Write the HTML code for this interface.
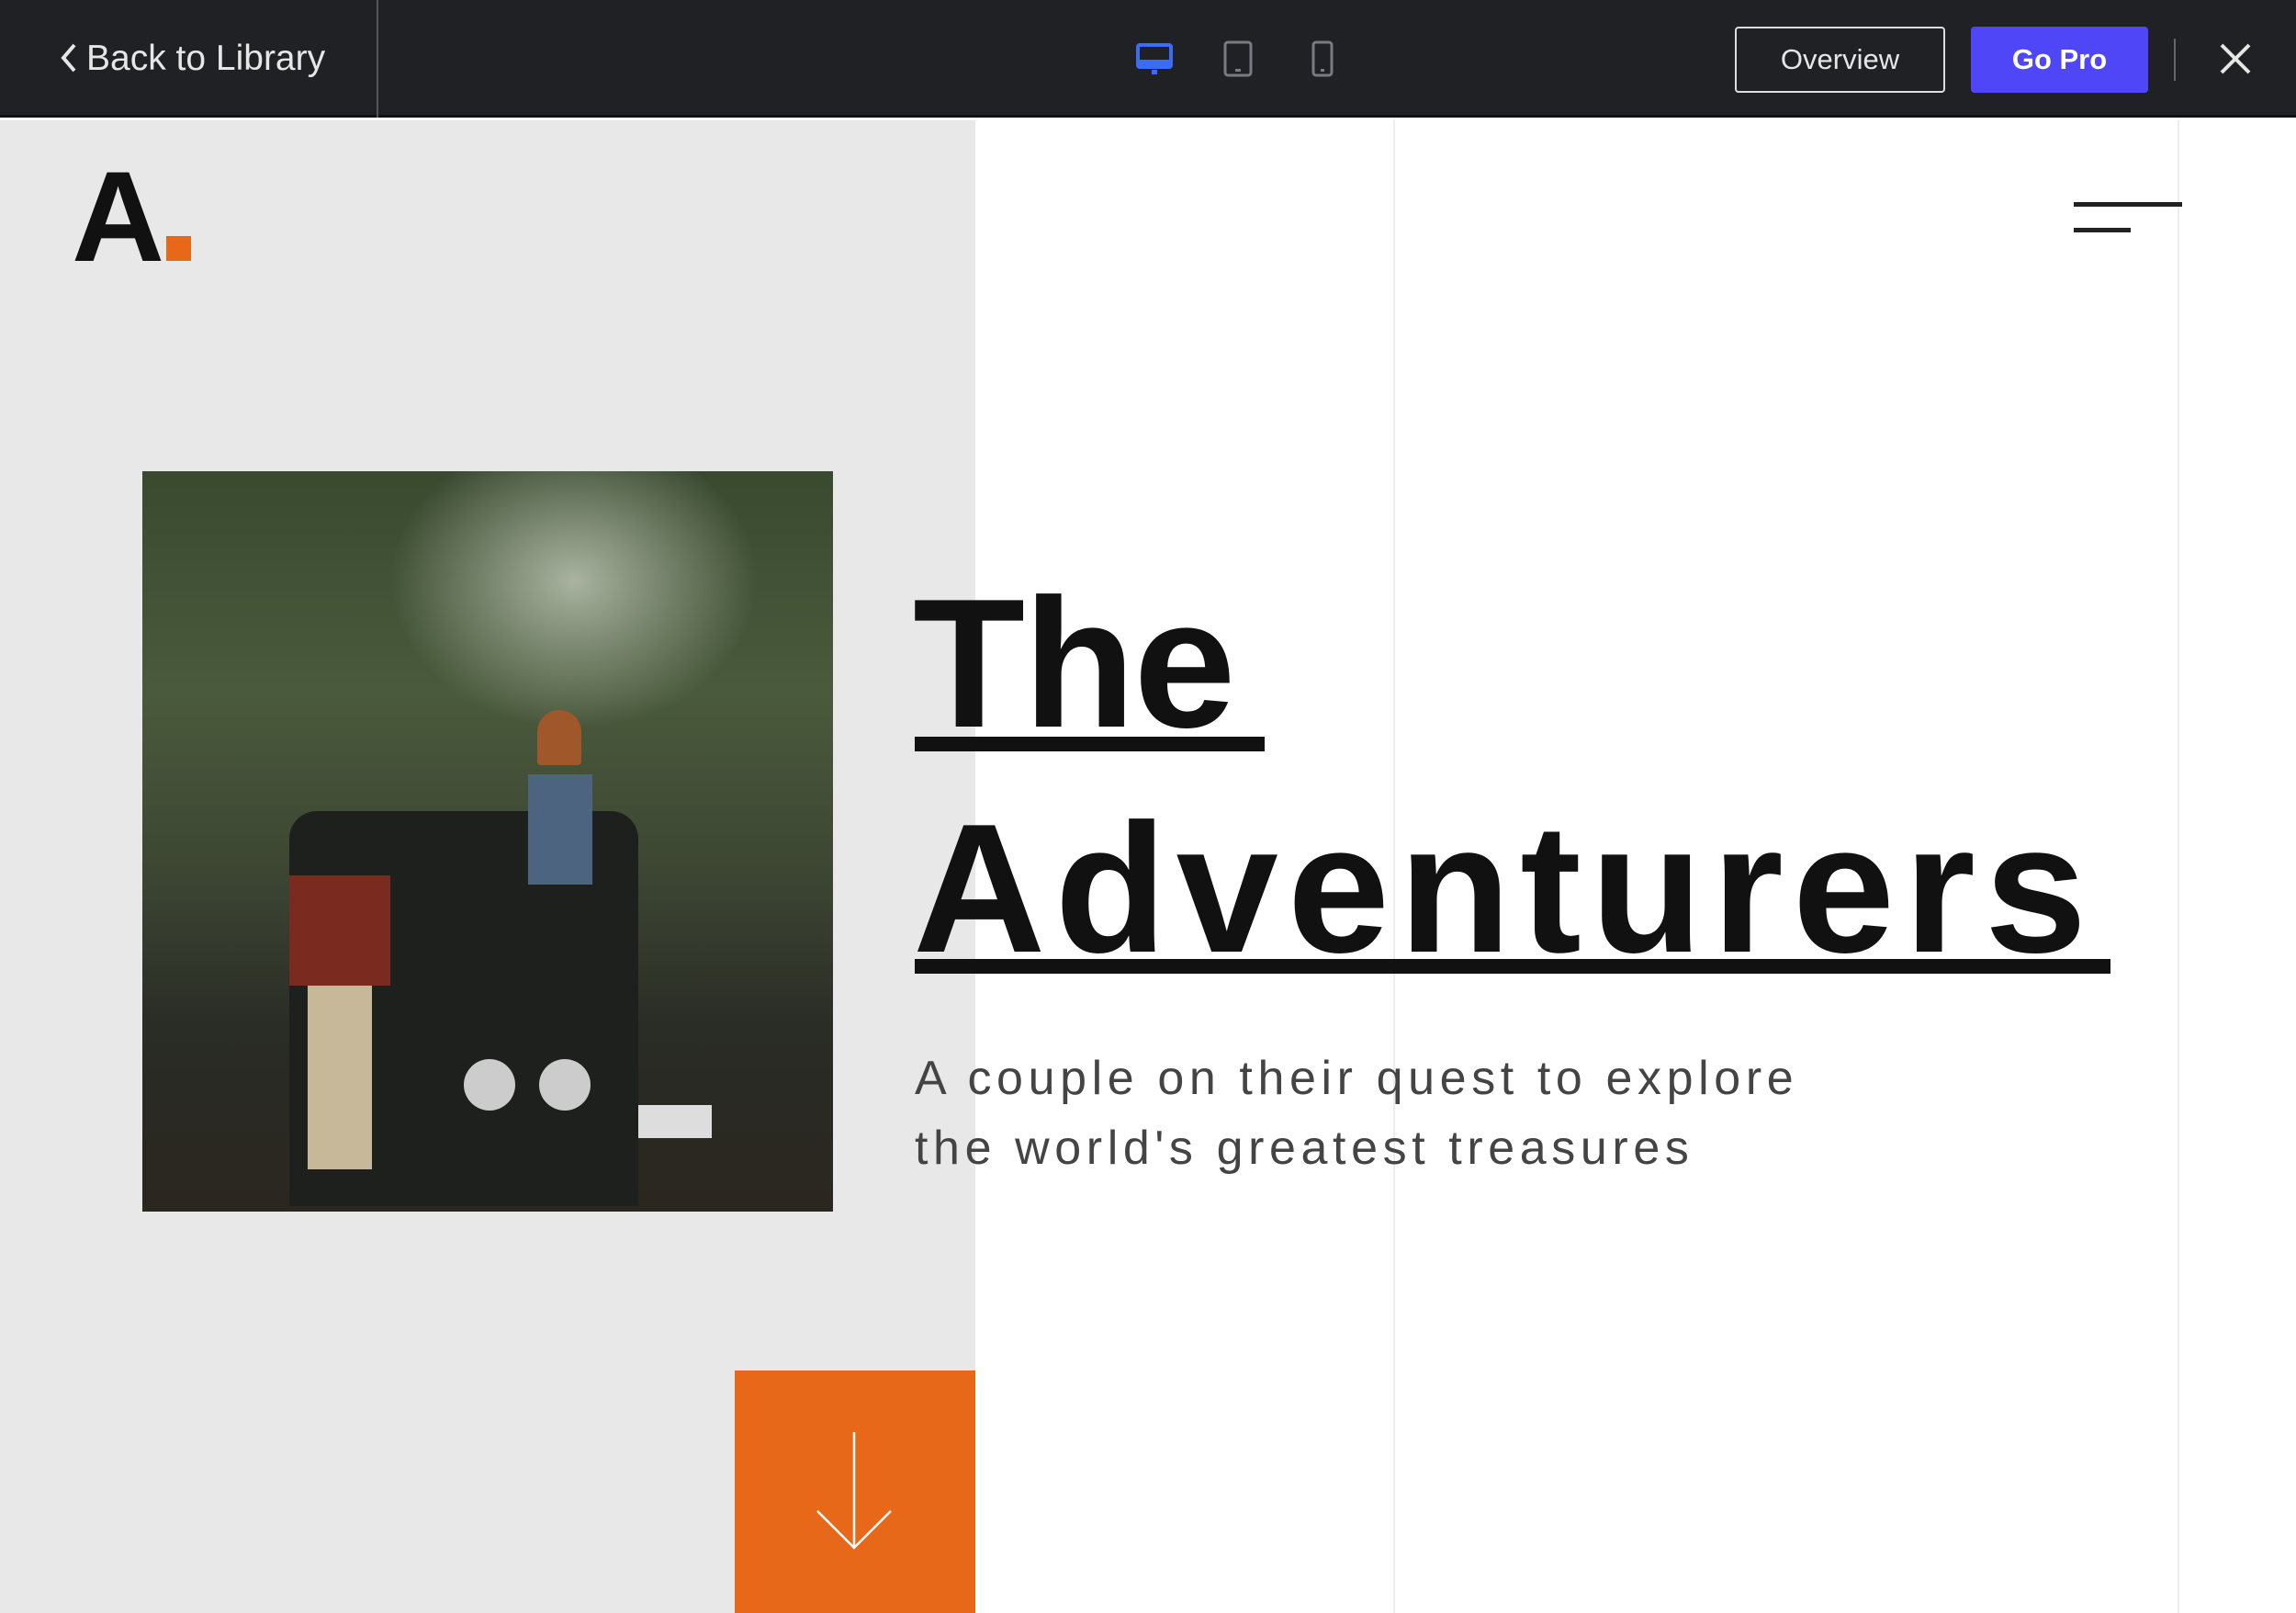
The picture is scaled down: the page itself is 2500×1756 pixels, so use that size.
<!DOCTYPE html>
<html><head><style>
*{margin:0;padding:0;box-sizing:border-box}
body{width:2500px;height:1756px;overflow:hidden;background:#fff;font-family:"Liberation Sans",sans-serif;position:relative}
.bar{position:absolute;left:0;top:0;width:2500px;height:128px;background:#202124;border-bottom:3px solid #111}
.abs{position:absolute}
</style></head><body>
<div class="bar">
  <div class="abs" style="left:64px;top:40px;color:#e6e6e6;font-size:39px;line-height:48px">
    <svg width="22" height="34" viewBox="0 0 22 34" style="vertical-align:-4px;margin-right:8px"><path d="M17 3 L5 17 L17 31" stroke="#e6e6e6" stroke-width="4" fill="none"/></svg>Back to Library</div>
  <div class="abs" style="left:410px;top:0;width:2px;height:128px;background:#555"></div>
  <svg class="abs" style="left:1237px;top:46px" width="40" height="36" viewBox="0 0 40 36"><rect x="2" y="3" width="36" height="24" rx="2" fill="none" stroke="#3b6cf5" stroke-width="4"/><rect x="4" y="19" width="32" height="8" fill="#3b6cf5"/><rect x="17" y="30" width="6" height="5" fill="#3b6cf5"/></svg>
  <svg class="abs" style="left:1332px;top:44px" width="32" height="40" viewBox="0 0 32 40"><rect x="2" y="2" width="28" height="36" rx="3" fill="none" stroke="#777b82" stroke-width="3"/><rect x="13" y="31" width="6" height="3" fill="#777b82"/></svg>
  <svg class="abs" style="left:1428px;top:44px" width="24" height="40" viewBox="0 0 24 40"><rect x="2" y="2" width="20" height="36" rx="3" fill="none" stroke="#777b82" stroke-width="3"/><rect x="10" y="31" width="4" height="3" fill="#777b82"/></svg>
  <div class="abs" style="left:1889px;top:29px;width:229px;height:72px;border:2px solid #ddd;border-radius:4px;color:#e6e6e6;font-size:31px;line-height:68px;text-align:center">Overview</div>
  <div class="abs" style="left:2146px;top:29px;width:193px;height:72px;background:#4f46f7;border-radius:4px;color:#fff;font-size:31px;font-weight:bold;line-height:72px;text-align:center">Go Pro</div>
  <div class="abs" style="left:2367px;top:42px;width:2px;height:46px;background:#666"></div>
  <svg class="abs" style="left:2416px;top:46px" width="36" height="36" viewBox="0 0 36 36"><path d="M3 3 L33 33 M33 3 L3 33" stroke="#e6e6e6" stroke-width="4"/></svg>
</div>
<div class="abs" style="left:0;top:131px;width:1062px;height:1625px;background:#e8e8e8"></div>
<div class="abs" style="left:1517px;top:131px;width:2px;height:1625px;background:#ececec"></div>
<div class="abs" style="left:2371px;top:131px;width:2px;height:1625px;background:#ececec"></div>
<div class="abs" style="left:78px;top:156px;font-size:140px;font-weight:bold;color:#111;line-height:160px;letter-spacing:-2px">A<span style="display:inline-block;width:27px;height:27px;background:#e8681a;margin-left:4px"></span></div>
<div class="abs" style="left:2258px;top:220px;width:118px;height:5px;background:#222"></div>
<div class="abs" style="left:2258px;top:248px;width:62px;height:5px;background:#222"></div>
<div class="abs" style="left:155px;top:513px;width:752px;height:806px;background:
radial-gradient(ellipse 200px 160px at 470px 120px,#a9b3a0 0%,rgba(150,160,140,0) 100%),
radial-gradient(ellipse 260px 200px at 430px 1040px,#3a2a20 0%,rgba(0,0,0,0) 100%),
linear-gradient(180deg,#3a4a30 0%,#4a5a3c 30%,#3c4532 55%,#2a2c26 75%,#2b2620 100%);overflow:hidden">
  <div class="abs" style="left:160px;top:370px;width:380px;height:430px;background:#1e201e;border-radius:30px 30px 0 0"></div>
  <div class="abs" style="left:160px;top:440px;width:110px;height:120px;background:#7a2a1e"></div>
  <div class="abs" style="left:420px;top:330px;width:70px;height:120px;background:#4d6480"></div>
  <div class="abs" style="left:430px;top:260px;width:48px;height:60px;background:#a0582a;border-radius:24px 24px 4px 4px"></div>
  <div class="abs" style="left:180px;top:560px;width:70px;height:200px;background:#c8b89a"></div>
  <div class="abs" style="left:350px;top:640px;width:56px;height:56px;border-radius:50%;background:#ccc"></div>
  <div class="abs" style="left:432px;top:640px;width:56px;height:56px;border-radius:50%;background:#ccc"></div>
  <div class="abs" style="left:540px;top:690px;width:80px;height:36px;background:#ddd"></div>
</div>
<div class="abs" style="left:994px;top:598px;font-size:200px;font-weight:bold;color:#111;line-height:250px;letter-spacing:-2px">The</div>
<div class="abs" style="left:996px;top:802px;width:381px;height:16px;background:#111"></div>
<div class="abs" style="left:994px;top:843px;font-size:200px;font-weight:bold;color:#111;line-height:250px;letter-spacing:10px;white-space:nowrap">Adventurers</div>
<div class="abs" style="left:996px;top:1044px;width:1302px;height:16px;background:#111"></div>
<div class="abs" style="left:996px;top:1136px;font-size:52px;color:#444;line-height:76px;letter-spacing:5.6px;white-space:nowrap">A couple on their quest to explore<br>the world's greatest treasures</div>
<div class="abs" style="left:800px;top:1492px;width:262px;height:264px;background:#e8681a"></div>
<svg class="abs" style="left:880px;top:1555px" width="100" height="140" viewBox="0 0 100 140"><path d="M50 4 V130 M10 90 L50 130 L90 90" stroke="#fff" stroke-width="2.5" fill="none"/></svg>
</body></html>
